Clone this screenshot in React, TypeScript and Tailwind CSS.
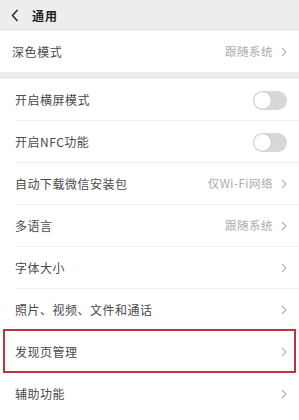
const font = { fontFamily: '"Noto Sans CJK SC", "Noto Sans", sans-serif' };

function Chevron() {
  return (
    <svg width="6" height="10" viewBox="0 0 6 10" className="ml-[8px]">
      <path d="M1 1 L5 5 L1 9" fill="none" stroke="#b5b5b5" strokeWidth="1.2" />
    </svg>
  );
}

function Toggle() {
  return (
    <div className="w-[34px] h-[19px] rounded-full bg-[#d8d8d8] flex items-center p-[1px]">
      <div className="w-[17px] h-[17px] rounded-full bg-white shadow-[0_0_1px_rgba(0,0,0,0.35)]" />
    </div>
  );
}

type RowProps = {
  label: string;
  value?: string;
  toggle?: boolean;
  divider?: boolean;
  highlight?: boolean;
};

function Row({ label, value, toggle, divider = true, highlight }: RowProps) {
  return (
    <div className="relative h-[42px] bg-white">
      <div className="h-full flex items-center pl-[15px] pr-[12px]">
        <span className="flex-1 text-[12px] tracking-[0.5px] text-[#4a4a4a]">{label}</span>
        {value && <span className="text-[11.5px] tracking-[0.5px] text-[#acacac]">{value}</span>}
        {toggle ? <Toggle /> : <Chevron />}
      </div>
      {divider && <div className="absolute bottom-0 left-[15px] right-0 h-px bg-[#f0f0f0]" />}
      {highlight && (
        <div className="absolute left-[3px] right-[3px] top-[-2px] bottom-0 border-2 border-[#b8373c]" />
      )}
    </div>
  );
}

export default function App() {
  return (
    <div className="w-[299px] h-[420px] overflow-hidden bg-[#ededed] flex flex-col" style={font}>
      <div className="h-[31px] shrink-0 flex items-center pl-[11px]">
        <svg width="8" height="13" viewBox="0 0 8 13">
          <path d="M6.5 1 L1.5 6.5 L6.5 12" fill="none" stroke="#222" strokeWidth="1.4" />
        </svg>
        <span className="ml-[13px] text-[12px] font-bold tracking-[1px] text-[#222]">通用</span>
      </div>

      <div className="h-[41px] shrink-0 bg-white flex items-center pl-[12px] pr-[12px]">
        <span className="flex-1 text-[12px] tracking-[0.6px] text-[#4a4a4a]">深色模式</span>
        <span className="text-[11.5px] tracking-[0.5px] text-[#acacac]">跟随系统</span>
        <Chevron />
      </div>

      <div className="h-[7px] shrink-0" />

      <div className="flex-1 bg-white">
        <Row label="开启横屏模式" toggle />
        <Row label="开启NFC功能" toggle />
        <Row label="自动下载微信安装包" value="仅Wi-Fi网络" />
        <Row label="多语言" value="跟随系统" />
        <Row label="字体大小" />
        <Row label="照片、视频、文件和通话" />
        <Row label="发现页管理" divider={false} highlight />
        <Row label="辅助功能" divider={false} />
      </div>
    </div>
  );
}
